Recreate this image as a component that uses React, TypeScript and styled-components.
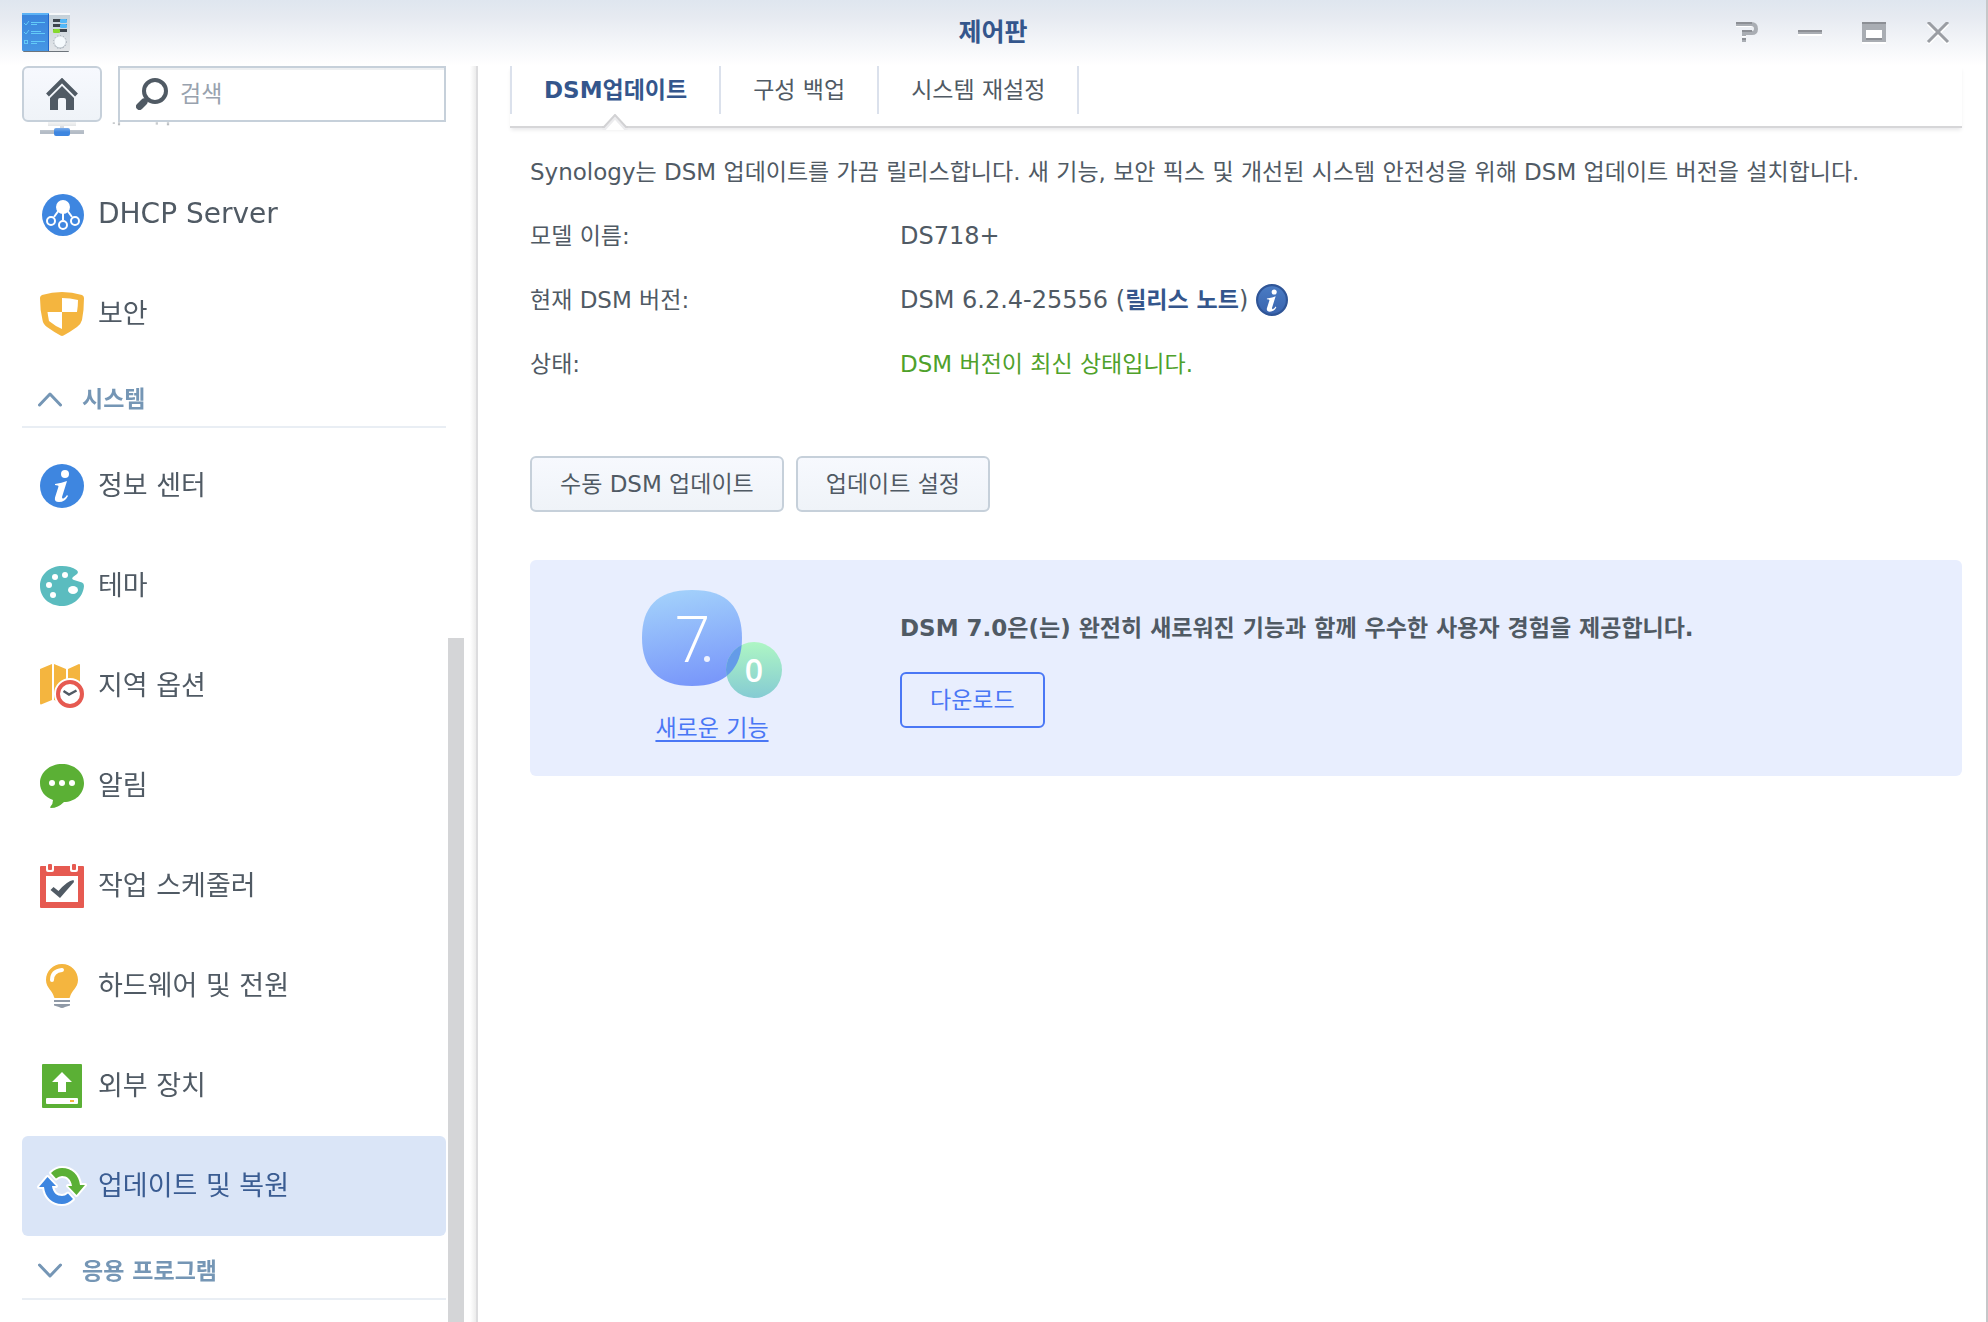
import React, { useLayoutEffect, useRef } from 'react';
import styled, { createGlobalStyle, css } from 'styled-components';

const GlobalStyle = createGlobalStyle`
  *, *::before, *::after { box-sizing: border-box; }
  body {
    margin: 0;
    background: #fff;
    color: #505a64;
    font-family: "DejaVu Sans", "Noto Sans CJK KR", sans-serif;
    font-size: 23px;
    line-height: 32px;
  }
  button, input { font: inherit; color: inherit; }
  ul, dl, dd, p, h1, h2 { margin: 0; padding: 0; }
`;

const Window = styled.div`
  display: flex;
  flex-direction: column;
  height: 100vh;
  overflow: hidden;
  border-right: 2px solid #c6c7c9;
`;

/* ---------- title bar ---------- */

const TitleBar = styled.header`
  flex: none;
  display: grid;
  grid-template-columns: 1fr auto 1fr;
  align-items: center;
  height: 66px;
  padding: 0 22px;
  background: linear-gradient(#dfe6ef, #e6eaf1 25%, #fff);
`;

const Title = styled.h1`
  font-size: 25px;
  font-weight: 700;
  color: #34568c;
`;

const WindowControls = styled.div`
  display: flex;
  justify-content: flex-end;
  gap: 40px;
  padding-right: 14px;
`;

const ControlButton = styled.button`
  display: flex;
  padding: 0;
  border: 0;
  background: none;
`;

/* ---------- sidebar ---------- */

const Body = styled.div`
  flex: 1;
  display: flex;
  min-height: 0;
`;

const Sidebar = styled.aside`
  flex: none;
  display: flex;
  flex-direction: column;
  width: 478px;
  padding-left: 22px;
  border-right: 2px solid #dcdcde;
  background: linear-gradient(to left, #ececec, #fff 6px);
`;

const Toolbar = styled.div`
  flex: none;
  display: flex;
  gap: 16px;
  height: 56px;
  padding-right: 30px;
`;

const buttonFace = css`
  border: 2px solid #c6d0da;
  border-radius: 6px;
  background: linear-gradient(#f7f9fe, #eff3f8);
`;

const HomeButton = styled.button`
  ${buttonFace}
  display: flex;
  align-items: center;
  justify-content: center;
  width: 80px;
  padding: 0;
`;

const SearchBox = styled.label`
  flex: 1;
  display: flex;
  align-items: center;
  gap: 12px;
  min-width: 0;
  padding: 0 16px;
  border: 2px solid #c6d0da;
  background: #fff;
  box-shadow: inset 0 2px #eef0f2;
`;

const SearchInput = styled.input`
  flex: 1;
  min-width: 0;
  padding: 0;
  border: 0;
  outline: 0;
  background: none;
  &::placeholder { color: #98a2ae; opacity: 1; }
`;

const ScrollArea = styled.div`
  flex: 1;
  display: flex;
  gap: 2px;
  min-height: 0;
`;

const Nav = styled.nav`
  flex: 1;
  overflow: hidden;
  padding-bottom: 14px;
  mask-image: linear-gradient(rgba(0, 0, 0, 0.2), #000 10px);
`;

const ScrollTrack = styled.div`
  display: flex;
  flex-direction: column;
  justify-content: flex-end;
  width: 28px;
`;

const ScrollThumb = styled.div`
  width: 16px;
  height: 57%;
  background: #d4d5d7;
`;

const NavList = styled.ul`
  list-style: none;
`;

const NavLink = styled.a<{ $active?: boolean; $latin?: boolean }>`
  display: flex;
  align-items: center;
  gap: 14px;
  height: 100px;
  padding: 0 18px;
  border-radius: 6px;
  font-size: ${(p) => (p.$latin ? 28 : 27)}px;
  text-decoration: none;
  color: ${(p) => (p.$active ? '#3a5c92' : '#505a64')};
  background: ${(p) => (p.$active ? '#dae5f7' : 'transparent')};
`;

const SectionToggle = styled.button`
  display: flex;
  align-items: center;
  gap: 20px;
  width: 100%;
  height: 64px;
  margin-bottom: 8px;
  padding: 8px 16px 0;
  border: 0;
  border-bottom: 2px solid #e9eef4;
  background: none;
  font-weight: 700;
  color: #7596b5;
`;

/* ---------- main pane ---------- */

const Main = styled.main`
  flex: 1;
  min-width: 0;
  padding: 0 24px 0 32px;
`;

const TabBar = styled.div`
  display: flex;
  height: 62px;
  padding-bottom: 12px;
  border-bottom: 2px solid #d6d6d8;
  box-shadow: 0 3px 4px -1px #e8e8ea;
`;

const Tab = styled.button<{ $active?: boolean }>`
  position: relative;
  height: 48px;
  padding: 0 32px;
  border: 0;
  border-right: 2px solid #dbe1ec;
  background: none;
  white-space: nowrap;
  font-weight: ${(p) => (p.$active ? 700 : 400)};
  color: ${(p) => (p.$active ? '#34568c' : '#505a64')};
  &:first-child { border-left: 2px solid #dbe1ec; }
`;

const Notch = styled.svg`
  position: absolute;
  top: 100%;
  left: 50%;
  margin-left: -14px;
`;

const Content = styled.section`
  padding: 12px 0 0 20px;
`;

const Intro = styled.p`
  padding: 16px 0;
`;

const Facts = styled.dl`
  display: grid;
  grid-template-columns: 370px 1fr;
  grid-auto-rows: 64px;
  align-items: center;
`;

const Fact = styled.dd<{ $latin?: boolean; $ok?: boolean }>`
  display: flex;
  align-items: center;
  font-size: ${(p) => (p.$latin ? 24 : 23)}px;
  color: ${(p) => (p.$ok ? '#4fa12b' : 'inherit')};
`;

const NotesLink = styled.a`
  font-size: 23px;
  font-weight: 700;
  text-decoration: none;
  color: #34568c;
`;

const InfoButton = styled.button`
  display: flex;
  margin-left: 8px;
  padding: 0;
  border: 0;
  background: none;
`;

const Actions = styled.div`
  display: flex;
  gap: 12px;
  margin: 60px 0 48px;
`;

const ActionButton = styled.button<{ $outline?: boolean }>`
  ${buttonFace}
  height: 56px;
  padding: 0 28px;
  ${(p) =>
    p.$outline &&
    css`
      border-color: #4a77f5;
      background: none;
      color: #4a77f5;
    `}
`;

const Banner = styled.section`
  display: grid;
  grid-template-columns: 364px 1fr;
  align-items: center;
  gap: 6px;
  padding: 30px 0 32px;
  border-radius: 6px;
  background: #e8eefe;
`;

const BannerSide = styled.div`
  display: flex;
  flex-direction: column;
  align-items: center;
  gap: 14px;
`;

const BannerText = styled.div`
  display: flex;
  flex-direction: column;
  align-items: flex-start;
  gap: 28px;
  padding-top: 6px;
`;

const BannerTitle = styled.h2`
  font-size: 23px;
  font-weight: 700;
`;

const FeatureLink = styled.a`
  color: #4a77f5;
  text-decoration: underline;
  text-decoration-thickness: 2px;
  text-underline-offset: 4px;
`;

/* ---------- drawings ---------- */

const Icon = ({ children }: { children: React.ReactNode }) => (
  <svg width="44" height="44" viewBox="0 0 44 44" overflow="visible" aria-hidden="true">
    {children}
  </svg>
);

const INFO_STEM =
  'M15 20 Q22 19 27 17 L22 33 Q22 35 23.500 34.500 Q25.500 33.500 27 31 L28 32 Q25 38 19 38 Q14 38 15 33.500 L18.500 22.500 Q18.500 21 15 21 Z';

const NetworkIcon = () => (
  <Icon>
    <rect x="2" y="0" width="40" height="28" rx="2" fill="#3e86e0" />
    <rect x="8" y="30" width="28" height="4" fill="#c9ccd0" />
    <rect x="20" y="34" width="4" height="4" fill="#c0c6ce" />
    <rect x="0" y="38" width="44" height="4" fill="#b4bcc6" />
    <rect x="14" y="36" width="16" height="8" rx="2" fill="#3e86e0" />
  </Icon>
);

const DhcpIcon = () => (
  <Icon>
    <circle cx="23" cy="23" r="21" fill="#3e86e0" />
    <g fill="none" stroke="#fff" strokeWidth="2">
      <path d="M19 18 L14 25 M23 20 V28 M27 18 L32 25" />
      <circle cx="11" cy="29" r="4" />
      <circle cx="23" cy="33" r="4" />
      <circle cx="35" cy="29" r="4" />
    </g>
    <circle cx="23" cy="15" r="7" fill="#fff" />
  </Icon>
);

const ShieldIcon = () => (
  <Icon>
    <path d="M2 3 Q22 -3 42 3 Q44 4 44 6 Q44 18 42 28 Q41 32 37 35 Q30 40 23.500 43.500 Q22 44.300 20.500 43.500 Q14 40 7 35 Q3 32 2.500 28 Q0 18 0 6 Q0 4 2 3 Z" fill="#f4b53f" />
    <path d="M22 6 Q30 6 38 8 Q38 14 37 20 H22 Z M22 20 V37 Q15 34 9 29 Q8 24 7.500 20 Z" fill="#fff" />
  </Icon>
);

const InfoIcon = () => (
  <Icon>
    <circle cx="22" cy="22" r="22" fill="#3e86e0" />
    <circle cx="25" cy="10" r="4" fill="#fff" />
    <path d={INFO_STEM} fill="#fff" />
  </Icon>
);

const PaletteIcon = () => (
  <Icon>
    <path d="M22 2 Q31 2 36.500 6 Q39 8 37 10 L33 13 Q31 15 34 16 L42 18.500 Q44 19 44 22 C43 34 33 42 22 42 C9 42 0 33 0 22 C0 10 10 2 22 2 Z" fill="#5bbcbf" />
    <g fill="#fff">
      <circle cx="15" cy="13" r="3" />
      <circle cx="25" cy="11" r="3" />
      <circle cx="9" cy="21" r="3" />
      <circle cx="13" cy="31" r="3" />
      <ellipse cx="33" cy="26" rx="5" ry="4" />
    </g>
  </Icon>
);

const RegionIcon = () => (
  <Icon>
    <path d="M0 5 L12 0 V36 L1 40.500 Q0 40.500 0 39 Z M14 0 L26 5 V40 L14 36 Z M28 5 L39 0 Q40 0 40 1 V36 L28 40 Z" fill="#f4b53f" />
    <circle cx="30" cy="30" r="16" fill="#fff" />
    <circle cx="30" cy="30" r="12" fill="#fff" stroke="#e65a51" strokeWidth="4" />
    <path d="M23.500 27 L29 30.500 L36.500 26.500" fill="none" stroke="#505a64" strokeWidth="2.500" />
  </Icon>
);

const ChatIcon = () => (
  <Icon>
    <path d="M22 0 C34 0 44 8 44 19 C44 30 35 38 24 38 Q18 44 11 44 Q9.500 44 10.500 42.500 Q13 40 13 36 C5 33 0 27 0 19 C0 8 10 0 22 0 Z" fill="#5bb035" />
    <g fill="#fff">
      <circle cx="12" cy="19" r="3" />
      <circle cx="22" cy="19" r="3" />
      <circle cx="32" cy="19" r="3" />
    </g>
  </Icon>
);

const CalendarIcon = () => (
  <Icon>
    <rect y="2" width="44" height="42" rx="1" fill="#e65a51" />
    <path d="M6 2 H14 V6 Q14 8 12 8 H8 Q6 8 6 6 Z M30 2 H38 V6 Q38 8 36 8 H32 Q30 8 30 6 Z M6 12 H38 V38 H6 Z" fill="#fff" />
    <rect x="8" width="4" height="6" rx="1" fill="#e65a51" />
    <rect x="32" width="4" height="6" rx="1" fill="#e65a51" />
    <path d="M10.500 26 L13.500 23 L18.500 27 Q27 17 33.500 16 L34 18 L20 34 Z" fill="#505a64" />
  </Icon>
);

const BulbIcon = () => (
  <Icon>
    <path d="M22 0 C31 0 38 7 38 16 C38 24 31 27 30 33 Q30 34 29 34 H15 Q14 34 14 33 C13 27 6 24 6 16 C6 7 13 0 22 0 Z" fill="#f4b53f" />
    <path d="M12 16 Q12 7 22 6" fill="none" stroke="#fff" strokeWidth="4" strokeLinecap="round" />
    <path d="M14 36 H30 V38 H14 Z M14 40 H30 V41.500 L25 43 Q22 45 19 43 L14 41.500 Z" fill="#8f99a6" />
  </Icon>
);

const ExternalIcon = () => (
  <Icon>
    <rect x="2" width="40" height="44" rx="1" fill="#5bb035" />
    <path d="M22 8 L32 18 H26 V28 H18 V18 H12 Z" fill="#fff" />
    <rect x="6" y="34" width="32" height="6" rx="1" fill="#fff" />
    <rect x="30" y="36" width="4" height="2" fill="#f4b53f" />
  </Icon>
);

const UPDATE_ARROW = 'M11 9 Q16 4 22 4 C32 4 39 11 40 21 H45 L36.500 31 L28 22 H32 C31 15 27 12 22 12 Q19 12 16 14.500 Z';

const UpdateIcon = () => (
  <Icon>
    <g stroke="#fff" strokeWidth="4" strokeLinejoin="round">
      <path d={UPDATE_ARROW} />
      <path d={UPDATE_ARROW} transform="rotate(180 22 22)" />
    </g>
    <path d={UPDATE_ARROW} fill="#5bb035" />
    <path d={UPDATE_ARROW} fill="#3e86e0" transform="rotate(180 22 22)" />
  </Icon>
);

const Chevron = ({ open }: { open: boolean }) => (
  <svg width="24" height="16" viewBox="0 0 24 16" aria-hidden="true">
    <path
      d={open ? 'M1.500 14 L12 3 L22.500 14' : 'M1.500 2 L12 13 L22.500 2'}
      fill="none"
      stroke="#7596b5"
      strokeWidth="3"
      strokeLinecap="round"
      strokeLinejoin="round"
    />
  </svg>
);

const ControlPanelLogo = () => (
  <svg width="48" height="40" viewBox="0 0 48 40" aria-hidden="true">
    <defs>
      <linearGradient id="cpSide" x1="0" y1="0" x2="0" y2="1">
        <stop offset="0" stopColor="#c3cfd8" />
        <stop offset="1" stopColor="#e3e6e9" />
      </linearGradient>
      <linearGradient id="cpBook" x1="0" y1="0" x2="0" y2="1">
        <stop offset="0" stopColor="#3a84dc" />
        <stop offset="1" stopColor="#4697e4" />
      </linearGradient>
    </defs>
    <rect x="1" y="36" width="46" height="3" rx="1" fill="#6d747b" />
    <rect x="26" y="0" width="22" height="38" rx="1" fill="url(#cpSide)" />
    <rect x="26" y="0" width="22" height="2" fill="#f6f8fa" />
    <rect x="0" y="0" width="27" height="38" rx="1" fill="url(#cpBook)" />
    <rect x="0" y="0" width="27" height="2" fill="#5cb2f5" />
    <rect x="26" y="1" width="1" height="37" fill="#2367cc" />
    <g stroke="#63cbf8" fill="none">
      <path d="M2 10 L4 12 L7 8 M2 19 L4 21 L7 17 M9 9.500 H23 M9 11.500 H15 M9 18.500 H19 M9 20.500 H23 M9 28.500 H23 M9 30.500 H15" />
      <rect x="2.500" y="27.500" width="3" height="3" />
    </g>
    <g fill="#3c444c">
      <rect x="31" y="6" width="14" height="3" />
      <rect x="31" y="11" width="14" height="3" />
      <rect x="31" y="16" width="14" height="3" />
    </g>
    <rect x="38" y="6" width="7" height="4" rx="1" fill="#52b7f7" />
    <rect x="38" y="11" width="7" height="4" rx="1" fill="#52b7f7" />
    <rect x="31" y="16" width="7" height="4" rx="1" fill="#86d92f" />
    <circle cx="38" cy="29" r="6.500" fill="none" stroke="#a3adb6" strokeDasharray="1 2" />
    <circle cx="38" cy="30" r="5.500" fill="#b0b8c0" />
    <circle cx="38" cy="29" r="5.500" fill="#f5fafd" />
  </svg>
);

const ControlGlyph = ({ children }: { children: React.ReactNode }) => (
  <svg width="24" height="22" viewBox="0 0 24 22" aria-hidden="true">
    {children}
  </svg>
);

const HomeIcon = () => (
  <svg width="32" height="32" viewBox="0 0 32 32" aria-hidden="true">
    <path d="M1.500 17 L16 2.500 L30.500 17" fill="none" stroke="#505a64" strokeWidth="4" />
    <path d="M16 8 L28 20 V32 H20 V22 Q20 20 18 20 H14 Q12 20 12 22 V32 H4 V20 Z" fill="#505a64" />
  </svg>
);

const SearchIcon = () => (
  <svg width="32" height="32" viewBox="0 0 32 32" aria-hidden="true">
    <circle cx="19" cy="13" r="11" fill="none" stroke="#505a64" strokeWidth="4" />
    <path d="M3.500 28.500 L8 24" stroke="#505a64" strokeWidth="7" strokeLinecap="round" />
    <path d="M8 24 L11.500 20.500" stroke="#505a64" strokeWidth="4" />
  </svg>
);

const ReleaseLogo = () => (
  <svg width="140" height="108" viewBox="0 0 140 108" role="img" aria-label="DSM 7.0">
    <defs>
      <linearGradient id="blob" x1="0.400" y1="0" x2="0.600" y2="1">
        <stop offset="0" stopColor="#a2d0fb" />
        <stop offset="1" stopColor="#7896fa" />
      </linearGradient>
      <linearGradient id="drop" x1="0" y1="0" x2="0" y2="1">
        <stop offset="0" stopColor="#aef6c4" />
        <stop offset="1" stopColor="#85cbd3" />
      </linearGradient>
      <clipPath id="blobClip">
        <path d="M50 0 C86 0 100 18 100 48 C100 78 84 96 50 96 C16 96 0 78 0 48 C0 18 14 0 50 0 Z" />
      </clipPath>
    </defs>
    <path d="M50 0 C86 0 100 18 100 48 C100 78 84 96 50 96 C16 96 0 78 0 48 C0 18 14 0 50 0 Z" fill="url(#blob)" />
    <circle cx="112" cy="80" r="28" fill="url(#drop)" />
    <circle cx="112" cy="80" r="28" fill="#649be8" clipPath="url(#blobClip)" />
    <text x="32" y="72" fill="#fff" fontFamily="'Open Sans', sans-serif" fontWeight="300" fontSize="64">
      7
    </text>
    <circle cx="65" cy="69" r="3" fill="#eef2fe" />
    <text x="112" y="92" fill="#fff" fontFamily="'Open Sans', sans-serif" fontWeight="600" fontSize="32" textAnchor="middle">
      0
    </text>
  </svg>
);

const ReleaseInfoIcon = () => (
  <svg width="32" height="32" viewBox="0 0 44 44" aria-hidden="true">
    <defs>
      <linearGradient id="infoFill" x1="0" y1="0" x2="0" y2="1">
        <stop offset="0" stopColor="#4a7cc4" />
        <stop offset="1" stopColor="#3a64ae" />
      </linearGradient>
    </defs>
    <circle cx="22" cy="22" r="20.500" fill="url(#infoFill)" stroke="#2f5597" strokeWidth="3" />
    <circle cx="25" cy="11" r="3.500" fill="#fff" />
    <path d={INFO_STEM} fill="#fff" />
  </svg>
);

/* ---------- data ---------- */

type Item = { label: string; icon: React.ComponentType; latin?: boolean; active?: boolean };

const connectivity: Item[] = [
  { label: '네트워크', icon: NetworkIcon },
  { label: 'DHCP Server', icon: DhcpIcon, latin: true },
  { label: '보안', icon: ShieldIcon },
];

const system: Item[] = [
  { label: '정보 센터', icon: InfoIcon },
  { label: '테마', icon: PaletteIcon },
  { label: '지역 옵션', icon: RegionIcon },
  { label: '알림', icon: ChatIcon },
  { label: '작업 스케줄러', icon: CalendarIcon },
  { label: '하드웨어 및 전원', icon: BulbIcon },
  { label: '외부 장치', icon: ExternalIcon },
  { label: '업데이트 및 복원', icon: UpdateIcon, active: true },
];

const NavItems = ({ items }: { items: Item[] }) => (
  <NavList>
    {items.map(({ label, icon: ItemIcon, latin, active }) => (
      <li key={label}>
        <NavLink href="#" $latin={latin} $active={active} aria-current={active ? 'page' : undefined}>
          <ItemIcon />
          <span>{label}</span>
        </NavLink>
      </li>
    ))}
  </NavList>
);

export default function App() {
  const nav = useRef<HTMLElement>(null);

  // Keep the selected entry, near the end of the list, in view.
  useLayoutEffect(() => {
    if (nav.current) nav.current.scrollTop = nav.current.scrollHeight;
  }, []);

  return (
    <>
      <GlobalStyle />
      <Window>
        <TitleBar>
          <ControlPanelLogo />
          <Title>제어판</Title>
          <WindowControls>
            <ControlButton aria-label="도움말">
              <ControlGlyph>
                <path d="M2 3 H18 Q22 3 22 7 Q22 11 18 11 H10 V15" fill="none" stroke="#fff" strokeWidth="4" />
                <path d="M2 2 H17 Q22 2 22 7 Q22 11 18 11 H10 V14" fill="none" stroke="#a9adb3" strokeWidth="4" />
                <path d="M2 1 H18 M8 9 H18 M8 17 H12" stroke="#8c8f95" strokeWidth="2" />
                <path d="M8 19 H12" stroke="#a9adb3" strokeWidth="2" />
              </ControlGlyph>
            </ControlButton>
            <ControlButton aria-label="최소화">
              <ControlGlyph>
                <path d="M0 9 H24" stroke="#8c8f95" strokeWidth="2" />
                <path d="M0 11 H24" stroke="#a9adb3" strokeWidth="2" />
                <path d="M0 13 H24" stroke="#fff" strokeWidth="2" />
              </ControlGlyph>
            </ControlButton>
            <ControlButton aria-label="최대화">
              <ControlGlyph>
                <path d="M0 0 H24 V20 H0 Z" fill="#a9adb3" />
                <path d="M4 8 H20 V16 H4 Z M0 20 H24 V22 H0 Z" fill="#fff" />
                <path d="M0 0 H24 V2 H0 Z M4 16 H20 V18 H4 Z" fill="#8c8f95" />
              </ControlGlyph>
            </ControlButton>
            <ControlButton aria-label="닫기">
              <ControlGlyph>
                <path d="M2 2 L22 22 M22 2 L2 22" stroke="#fff" strokeWidth="3" />
                <path d="M2 0 L22 20 M22 0 L2 20" stroke="#9a9da3" strokeWidth="3" />
              </ControlGlyph>
            </ControlButton>
          </WindowControls>
        </TitleBar>

        <Body>
          <Sidebar>
            <Toolbar>
              <HomeButton aria-label="홈">
                <HomeIcon />
              </HomeButton>
              <SearchBox>
                <SearchIcon />
                <SearchInput type="text" placeholder="검색" aria-label="검색" />
              </SearchBox>
            </Toolbar>
            <ScrollArea>
              <Nav ref={nav}>
                <NavItems items={connectivity} />
                <SectionToggle aria-expanded="true">
                  <Chevron open />
                  시스템
                </SectionToggle>
                <NavItems items={system} />
                <SectionToggle aria-expanded="false">
                  <Chevron open={false} />
                  응용 프로그램
                </SectionToggle>
              </Nav>
              <ScrollTrack>
                <ScrollThumb />
              </ScrollTrack>
            </ScrollArea>
          </Sidebar>

          <Main>
            <TabBar role="tablist">
              <Tab role="tab" aria-selected="true" $active>
                DSM업데이트
                <Notch width="26" height="16" viewBox="0 0 26 16" aria-hidden="true">
                  <path d="M2 14 L13 1 L24 14 V16 H2 Z" fill="#fff" />
                  <path d="M1 16 L13 3 L25 16" fill="none" stroke="#ececee" strokeWidth="4" />
                  <path d="M0 13 H2 L13 1 L24 13 H26" fill="none" stroke="#d2d2d4" strokeWidth="2" />
                </Notch>
              </Tab>
              <Tab role="tab" aria-selected="false">구성 백업</Tab>
              <Tab role="tab" aria-selected="false">시스템 재설정</Tab>
            </TabBar>

            <Content>
              <Intro>
                Synology는 DSM 업데이트를 가끔 릴리스합니다. 새 기능, 보안 픽스 및 개선된 시스템 안전성을 위해 DSM 업데이트 버전을 설치합니다.
              </Intro>
              <Facts>
                <dt>모델 이름:</dt>
                <Fact $latin>DS718+</Fact>
                <dt>현재 DSM 버전:</dt>
                <Fact $latin>
                  <span>
                    DSM 6.2.4-25556 (<NotesLink href="#">릴리스 노트</NotesLink>)
                  </span>
                  <InfoButton aria-label="정보">
                    <ReleaseInfoIcon />
                  </InfoButton>
                </Fact>
                <dt>상태:</dt>
                <Fact $ok>DSM 버전이 최신 상태입니다.</Fact>
              </Facts>

              <Actions>
                <ActionButton>수동 DSM 업데이트</ActionButton>
                <ActionButton>업데이트 설정</ActionButton>
              </Actions>

              <Banner>
                <BannerSide>
                  <ReleaseLogo />
                  <FeatureLink href="#">새로운 기능</FeatureLink>
                </BannerSide>
                <BannerText>
                  <BannerTitle>DSM 7.0은(는) 완전히 새로워진 기능과 함께 우수한 사용자 경험을 제공합니다.</BannerTitle>
                  <ActionButton $outline>다운로드</ActionButton>
                </BannerText>
              </Banner>
            </Content>
          </Main>
        </Body>
      </Window>
    </>
  );
}
